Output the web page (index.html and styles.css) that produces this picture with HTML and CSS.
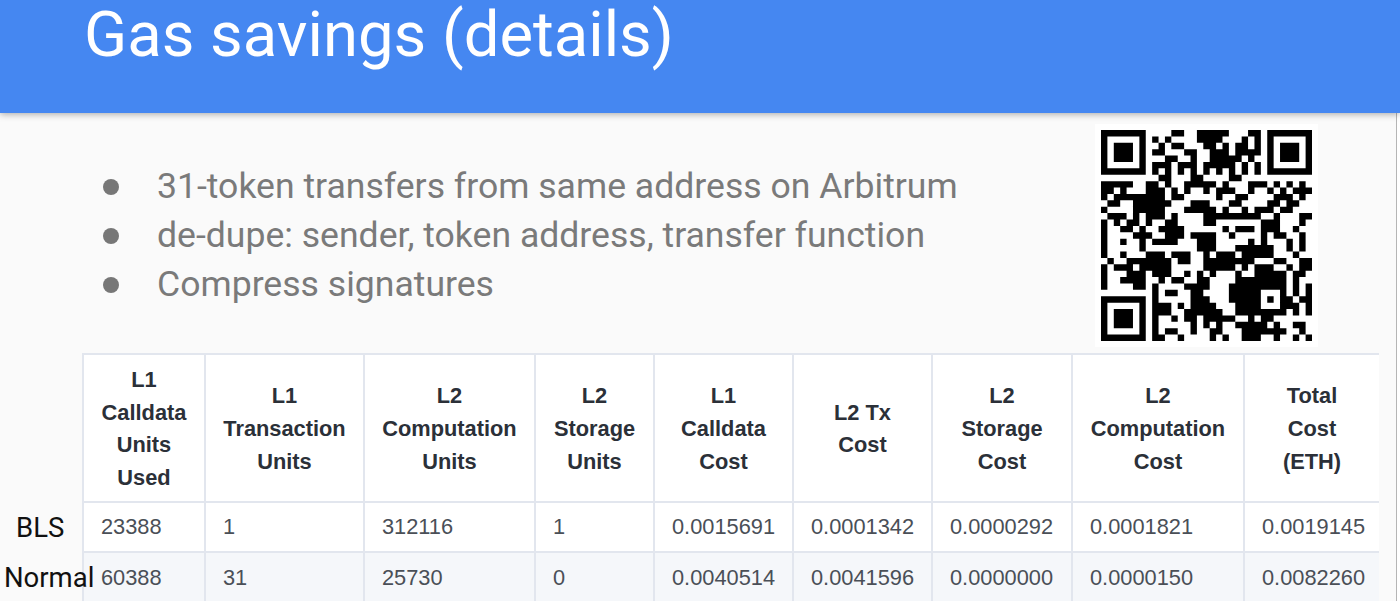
FILE: index.html
```html
<!DOCTYPE html>
<html lang="en">
<head>
<meta charset="utf-8">
<title>Gas savings (details)</title>
<link rel="stylesheet" href="styles.css">
</head>
<body>
<div class="slide">
  <header class="banner"><h1 class="title">Gas savings (details)</h1></header>
  <main class="content">
    <section class="intro">
      <ul class="points">
        <li class="point">31-token transfers from same address on Arbitrum</li>
        <li class="point">de-dupe: sender, token address, transfer function</li>
        <li class="point">Compress signatures</li>
      </ul>
      <div class="qr-frame">
        <svg class="qr" viewBox="0 0 33 33" width="211" height="211" aria-label="QR code">
          <path class="qr-solid" fill-rule="evenodd" d="M0 0h7v7h-7zM1 1v5h5v-5zM2 2h3v3h-3zM26 0h7v7h-7zM27 1v5h5v-5zM28 2h3v3h-3zM0 26h7v7h-7zM1 27v5h5v-5zM2 28h3v3h-3z"/>
          <path class="qr-run" d="M11 .5h2M15 .5h5M23 .5h2
          M8 1.5h1M10 1.5h1M15 1.5h4M22 1.5h1M24 1.5h1
          M9 2.5h1M11 2.5h2M16 2.5h2M19 2.5h1M21 2.5h2M24 2.5h1
          M8 3.5h2M13 3.5h2M17 3.5h3M21 3.5h4
          M10 4.5h2M14 4.5h1M17 4.5h5M23 4.5h1
          M8 5.5h3M12 5.5h3M16 5.5h3M19 5.5h2M22 5.5h1M24 5.5h1
          M8 6.5h1M10 6.5h1M12 6.5h1M14 6.5h1M16 6.5h1M18 6.5h1M20 6.5h1M22 6.5h1M24 6.5h1
          M9 7.5h2M14 7.5h2M20 7.5h2
          M0 8.5h5M7 8.5h2M10 8.5h1M13 8.5h5M19 8.5h1M23 8.5h3M27 8.5h1M29 8.5h1M31 8.5h1
          M0 9.5h2M3 9.5h1M7 9.5h3M11 9.5h1M13 9.5h1M16 9.5h1M18 9.5h3M23 9.5h1M26 9.5h1M28 9.5h1M30 9.5h3
          M0 10.5h1M2 10.5h8M11 10.5h2M18 10.5h1M21 10.5h2M27 10.5h3M31 10.5h1
          M1 11.5h2M5 11.5h2M7 11.5h4M14 11.5h3M20 11.5h2M26 11.5h2M29 11.5h2
          M0 12.5h1M5 12.5h2M7 12.5h3M13 12.5h5M19 12.5h1M22 12.5h1M24 12.5h3M28 12.5h2
          M1 13.5h2M3 13.5h1M5 13.5h1M7 13.5h3M11 13.5h1M16 13.5h9M27 13.5h1M31 13.5h2
          M0 14.5h1M2 14.5h1M4 14.5h2M7 14.5h1M10 14.5h2M16 14.5h2M25 14.5h3M31 14.5h1
          M0 15.5h1M3 15.5h2M6 15.5h1M9 15.5h4M19 15.5h1M21 15.5h3M25 15.5h3M30 15.5h1
          M0 16.5h1M5 16.5h3M10 16.5h3M14 16.5h4M20 16.5h1M25 16.5h1M27 16.5h2M31 16.5h1
          M0 17.5h1M3 17.5h1M6 17.5h1M8 17.5h3M11 17.5h1M15 17.5h3M23 17.5h1M25 17.5h1M29 17.5h1M31 17.5h1
          M0 18.5h1M6 18.5h1M15 18.5h3M21 18.5h3M24 18.5h3M29 18.5h1M31 18.5h1
          M0 19.5h1M3 19.5h1M7 19.5h3M11 19.5h3M16 19.5h1M18 19.5h3M22 19.5h5M30 19.5h1
          M1 20.5h1M4 20.5h3M7 20.5h4M12 20.5h2M16 20.5h5M21 20.5h3M27 20.5h2M31 20.5h2
          M0 21.5h1M2 21.5h3M6 21.5h5M16 21.5h5M22 21.5h1M24 21.5h2M26 21.5h1M29 21.5h1M31 21.5h2
          M0 22.5h1M4 22.5h3M8 22.5h3M13 22.5h1M15 22.5h1M17 22.5h1M21 22.5h1M24 22.5h5M30 22.5h2
          M0 23.5h1M3 23.5h4M9 23.5h1M11 23.5h2M15 23.5h2M21 23.5h8M30 23.5h1
          M0 24.5h1M5 24.5h2M8 24.5h1M13 24.5h4M20 24.5h9M30 24.5h1M32 24.5h1
          M8 25.5h1M10 25.5h2M14 25.5h2M20 25.5h5M28 25.5h1M30 25.5h1M32 25.5h1
          M8 26.5h1M14 26.5h3M20 26.5h5M26 26.5h1M28 26.5h2M31 26.5h2
          M8 27.5h3M12 27.5h1M14 27.5h4M21 27.5h4M28 27.5h3M32 27.5h1
          M8 28.5h3M13 28.5h6M21 28.5h8M30 28.5h1M32 28.5h1
          M8 29.5h1M11 29.5h1M13 29.5h2M16 29.5h5M23 29.5h1M25 29.5h2
          M8 30.5h1M14 30.5h1M16 30.5h1M18 30.5h1M21 30.5h5M27 30.5h1M30 30.5h2
          M8 31.5h1M10 31.5h2M14 31.5h1M17 31.5h2M22 31.5h5M27 31.5h2M31 31.5h1
          M8 32.5h2M12 32.5h1M17 32.5h1M19 32.5h1M22 32.5h3M27 32.5h1M30 32.5h1M32 32.5h1"/>
        </svg>
      </div>
    </section>
    <table class="gas-table">
      <colgroup>
        <col class="c1"><col class="c2"><col class="c3"><col class="c4"><col class="c5"><col class="c6"><col class="c7"><col class="c8"><col class="c9">
      </colgroup>
      <thead>
        <tr>
          <th>L1<br>Calldata<br>Units<br>Used</th>
          <th>L1<br>Transaction<br>Units</th>
          <th>L2<br>Computation<br>Units</th>
          <th>L2<br>Storage<br>Units</th>
          <th>L1<br>Calldata<br>Cost</th>
          <th>L2 Tx<br>Cost</th>
          <th>L2<br>Storage<br>Cost</th>
          <th>L2<br>Computation<br>Cost</th>
          <th>Total<br>Cost<br>(ETH)</th>
        </tr>
      </thead>
      <tbody>
        <tr>
          <td class="first"><span class="row-label bls">BLS</span>23388</td>
          <td>1</td><td>312116</td><td>1</td><td>0.0015691</td><td>0.0001342</td><td>0.0000292</td><td>0.0001821</td><td>0.0019145</td>
        </tr>
        <tr class="alt">
          <td class="first"><span class="row-label normal">Normal</span>60388</td>
          <td>31</td><td>25730</td><td>0</td><td>0.0040514</td><td>0.0041596</td><td>0.0000000</td><td>0.0000150</td><td>0.0082260</td>
        </tr>
      </tbody>
    </table>
  </main>
</div>
</body>
</html>
```

FILE: styles.css
```css
html, body {
  margin: 0;
  height: 100%;
  overflow: hidden;
  background: #fff;
}

.slide {
  height: 601px;
  display: flex;
  flex-direction: column;
  filter: blur(0.45px);
}

.banner {
  height: 113px;
  flex: none;
  background: #4587f1;
  box-shadow: 0 1px 7px rgba(0, 0, 0, 0.35);
  position: relative;
  z-index: 1;
}

.title {
  margin: 0;
  padding-left: 84px;
  font: 400 63.4px/68px Roboto, sans-serif;
  color: #fff;
}

.content {
  flex: 1;
  width: 1397px;
  background: #fafafa;
  border-right: 1px solid #b5b5b5;
  padding-left: 82px;
  box-sizing: border-box;
  overflow: hidden;
}

.intro {
  height: 240px;
  display: flex;
  justify-content: space-between;
  align-items: flex-start;
  padding-right: 78px;
}

.points {
  list-style: none;
  margin: 0;
  padding: 49px 0 0 21px;
}

.point {
  display: flex;
  align-items: center;
  gap: 38px;
  height: 49px;
  font: 400 35.6px/49px Roboto, sans-serif;
  color: #7a7a7a;
}

.point::before {
  content: "";
  width: 16px;
  height: 16px;
  border-radius: 50%;
  background: #777;
  flex: none;
}

.qr-frame {
  margin-top: 11px;
  padding: 6px;
  background: #fff;
  line-height: 0;
}

.qr-solid {
  fill: #000;
}

.qr-run {
  fill: none;
  stroke: #000;
  stroke-width: 1;
}

.gas-table {
  width: 1296px;
  table-layout: fixed;
  border-collapse: collapse;
  background: #fff;
  font: 400 21.8px/32.7px "Liberation Sans", Arial, sans-serif;
  color: #4a4f57;
}

.c1 { width: 122px; }
.c2 { width: 159px; }
.c3 { width: 171px; }
.c4 { width: 119px; }
.c5 { width: 139px; }
.c6 { width: 139px; }
.c7 { width: 140px; }
.c8 { width: 172px; }
.c9 { width: 135px; }

.gas-table th,
.gas-table td {
  border: 2px solid #e2e6ee;
  box-sizing: border-box;
}

.gas-table tr > :last-child {
  border-right: 0;
}

.gas-table th {
  padding: 9px 8px 6px;
  font-weight: 700;
  color: #2b3038;
  text-align: center;
}

.gas-table td {
  padding: 8px 0 7px 17px;
  white-space: nowrap;
}

.gas-table .alt td {
  padding-top: 9px;
}

.alt {
  background: #f5f7fa;
}

.first {
  position: relative;
}

.row-label {
  position: absolute;
  top: 8px;
  font: 400 27.5px/34px Roboto, sans-serif;
  color: #111;
}

.bls { left: -68px; }
.normal { left: -80px; }
```
